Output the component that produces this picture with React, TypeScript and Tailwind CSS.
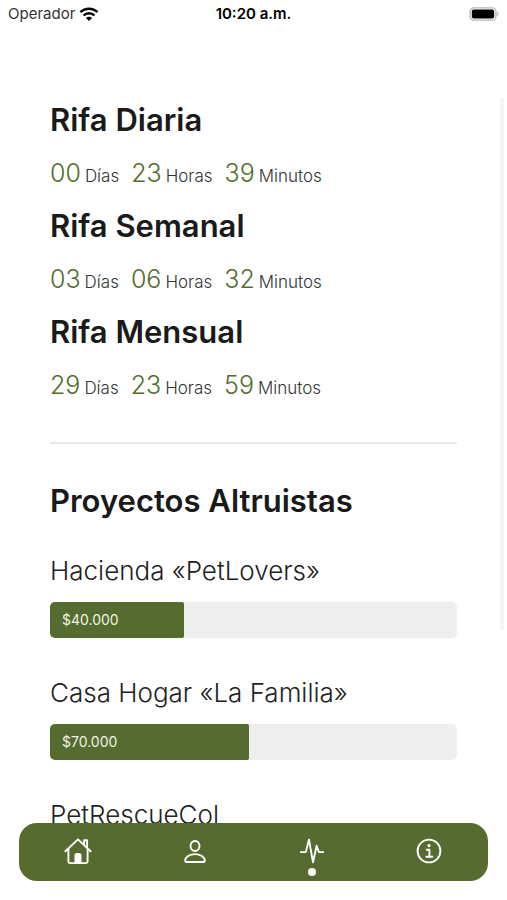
import type { ReactNode } from "react"
import clsx from "clsx"

interface Project {
  name: string
  raised?: string
  percent?: number
}

const raffles = [
  { name: "Rifa Diaria", days: "00", hours: "23", minutes: "39" },
  { name: "Rifa Semanal", days: "03", hours: "06", minutes: "32" },
  { name: "Rifa Mensual", days: "29", hours: "23", minutes: "59" },
]

const projects: Project[] = [
  { name: "Hacienda «PetLovers»", raised: "$40.000", percent: 33 },
  { name: "Casa Hogar «La Familia»", raised: "$70.000", percent: 49 },
  { name: "PetRescueCol" },
]

function StatusBar() {
  return (
    <header className="grid h-7 shrink-0 grid-cols-3 items-center px-2 text-black">
      <div className="flex items-center gap-1 text-[15px] text-[#333333]">
        <span>Operador</span>
        <svg viewBox="0 0 20 14" className="h-[14px] w-5 text-black" fill="none" stroke="currentColor" strokeWidth="2.4">
          <path d="M1.4 5.2C6.2.5 13.8.5 18.6 5.2" />
          <path d="M4.5 8.5c3.1-3 7.9-3 11 0" />
          <path d="M10 14 6.9 10.9c1.8-1.6 4.4-1.6 6.2 0Z" fill="currentColor" stroke="none" />
        </svg>
      </div>
      <p className="text-center text-[15px] font-semibold whitespace-nowrap">10:20 a.m.</p>
      <svg viewBox="0 0 30 14" className="h-[14px] w-[30px] justify-self-end" aria-label="Batería">
        <rect x="1" y="0.8" width="26" height="12.4" rx="4" fill="#fff" stroke="#b5b5b5" strokeWidth="1.3" />
        <rect x="2.8" y="2.6" width="22.4" height="8.8" rx="2" fill="#000" />
        <path d="M28.3 4.8c1.8.7 1.8 3.7 0 4.4Z" fill="#b5b5b5" />
      </svg>
    </header>
  )
}

function TimeUnit({ value, label }: { value: string; label: string }) {
  return (
    <span className="flex items-baseline gap-1">
      <span className="text-[25px] leading-8 font-light text-[#556b2f]">{value}</span>
      <span className="text-[17px] leading-none font-light text-[#333333]">{label}</span>
    </span>
  )
}

function ProjectItem({ name, raised, percent = 0 }: Project) {
  return (
    <article>
      <h3 className="text-[26px] leading-8 font-light text-[#222222]">{name}</h3>
      <div className="mt-[15px] h-9 overflow-hidden rounded-[5px] bg-[#eeeeee]">
        {raised && (
          <div
            className="flex h-full items-center rounded-r-xs bg-[#556b2f] px-3 text-sm text-[#eef3e4]"
            style={{ width: `${percent}%` }}
          >
            {raised}
          </div>
        )}
      </div>
    </article>
  )
}

function NavButton({ label, active, children }: { label: string; active?: boolean; children: ReactNode }) {
  return (
    <button type="button" aria-label={label} className="flex flex-1 flex-col items-center pt-[14px]">
      <svg
        viewBox="0 0 28 28"
        className="size-7"
        fill="none"
        stroke="currentColor"
        strokeWidth="1.9"
        strokeLinecap="round"
        strokeLinejoin="round"
      >
        {children}
      </svg>
      <span className={clsx("mt-[3px] size-2 rounded-full", active ? "bg-white" : "bg-transparent")} />
    </button>
  )
}

function BottomNav() {
  return (
    <nav className="mx-[19px] mb-[19px] flex h-[58px] shrink-0 rounded-[18px] bg-[#556b2f] text-white">
      <NavButton label="Inicio">
        <path d="M1.4 14.3 14 2.4l12.6 11.9" />
        <path d="M4.4 12.5v12.1c0 .9.6 1.5 1.5 1.5h16.2c.9 0 1.5-.6 1.5-1.5V12.5" />
        <path d="M20.1 7.5V3.2h3v7.2" />
        <path d="M11 26v-8.3c0-.6.4-1 1-1h4c.6 0 1 .4 1 1V26Z" fill="currentColor" strokeWidth="1" />
      </NavButton>
      <NavButton label="Perfil">
        <ellipse cx="14" cy="9" rx="4.5" ry="5" />
        <path d="M14 17.1c-5.4 0-9.8 3.1-9.8 6.3 0 1 .7 1.6 1.7 1.6h16.2c1 0 1.7-.6 1.7-1.6 0-3.2-4.4-6.3-9.8-6.3Z" />
      </NavButton>
      <NavButton label="Actividad" active>
        <path d="M2.8 15.1h5L11 2.6l4 22.8 3.6-16.6 2.3 6.3h4.5" />
      </NavButton>
      <NavButton label="Información">
        <circle cx="14" cy="14" r="11.4" />
        <circle cx="14" cy="8.6" r="1.6" fill="currentColor" stroke="none" />
        <path d="M11.7 12.7h2.7v7M11.3 19.8h6" />
      </NavButton>
    </nav>
  )
}

export default function App() {
  return (
    <div className="flex h-screen flex-col bg-white font-['Inter','Noto_Sans',sans-serif]">
      <StatusBar />

      <main className="relative min-h-0 flex-1 overflow-hidden px-[50px] pt-[72px]">
        <section className="space-y-[17px]">
          {raffles.map((raffle) => (
            <article key={raffle.name}>
              <h2 className="text-[31px] leading-10 font-semibold text-[#1a1a1a]">{raffle.name}</h2>
              <div className="mt-[17px] flex gap-3">
                <TimeUnit value={raffle.days} label="Días" />
                <TimeUnit value={raffle.hours} label="Horas" />
                <TimeUnit value={raffle.minutes} label="Minutos" />
              </div>
            </article>
          ))}
        </section>

        <hr className="mt-[41px] border-t-2 border-[#e8e8e8]" />

        <section className="mt-[37px]">
          <h2 className="text-[31px] leading-10 font-semibold text-[#1a1a1a]">Proyectos Altruistas</h2>
          <div className="mt-[34px] space-y-[39px]">
            {projects.map((project) => (
              <ProjectItem key={project.name} {...project} />
            ))}
          </div>
        </section>

        {/* Scroll indicator */}
        <div className="absolute top-[70px] right-[3px] h-[533px] w-1 rounded-full bg-[#f5f5f5]" />
      </main>

      <BottomNav />
    </div>
  )
}
